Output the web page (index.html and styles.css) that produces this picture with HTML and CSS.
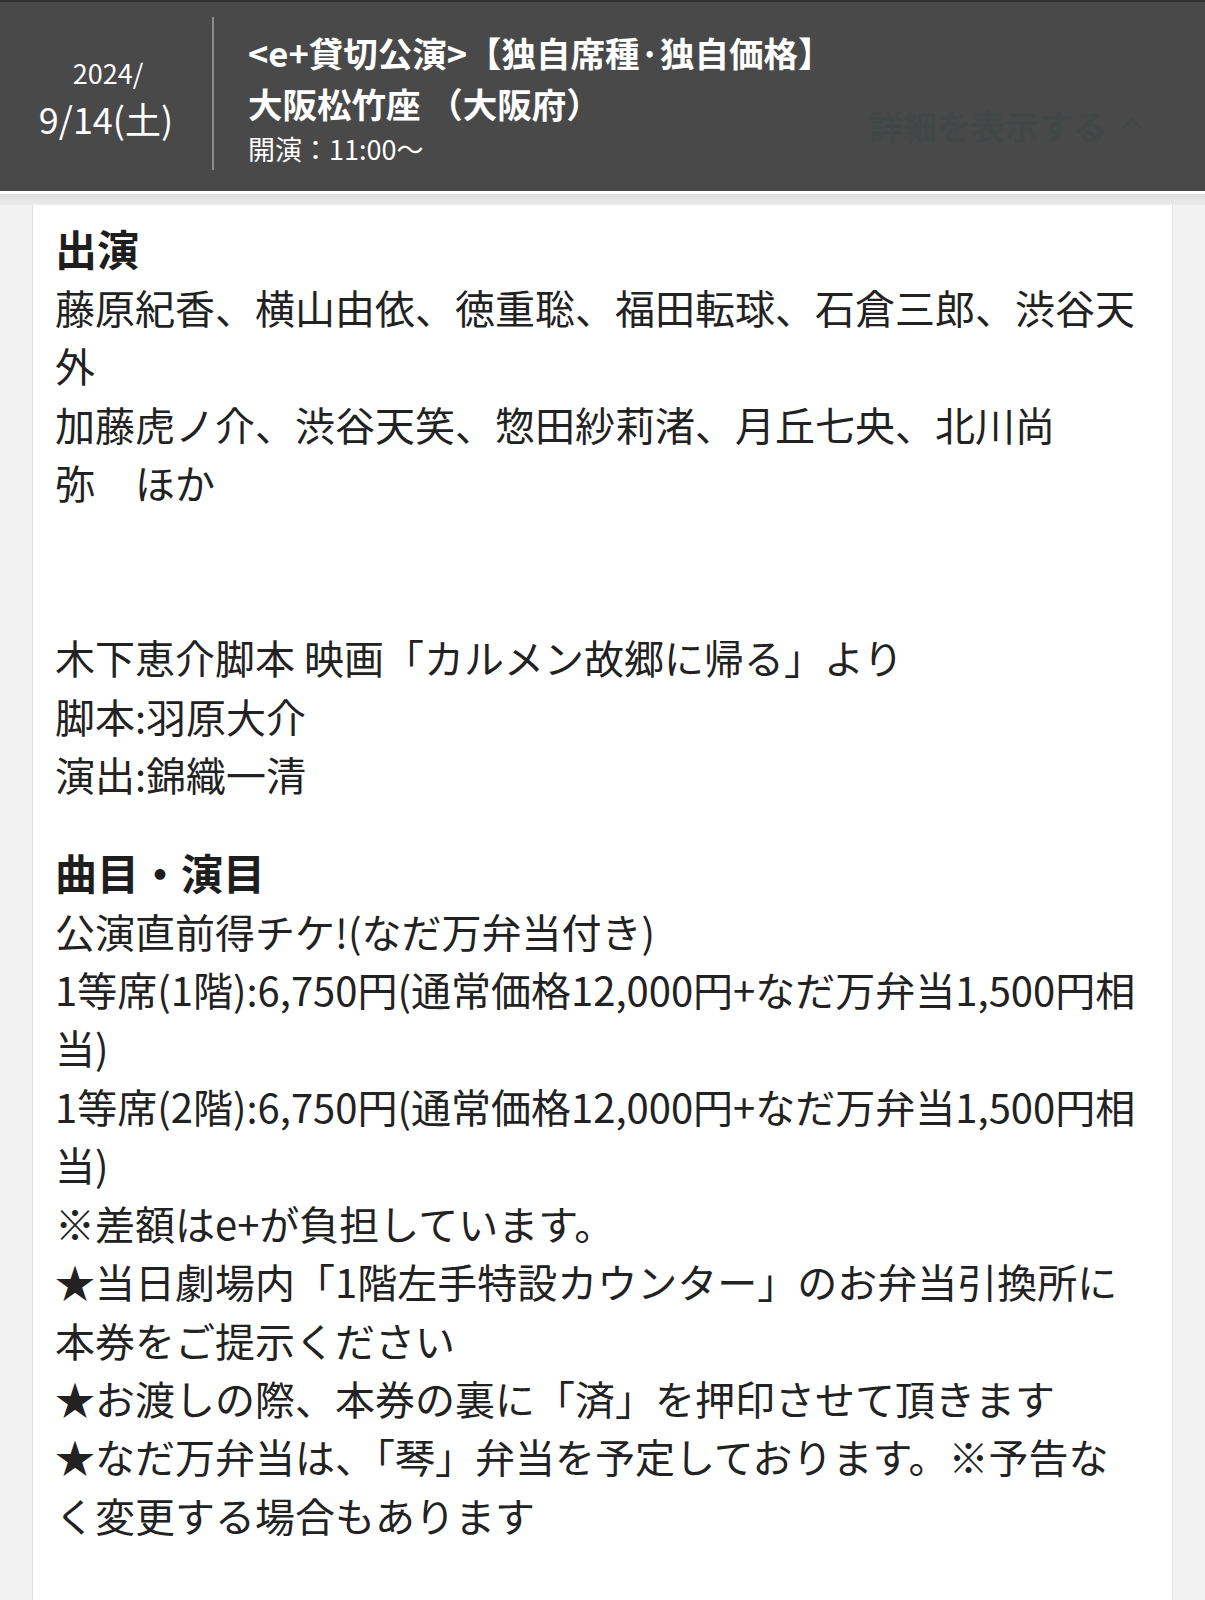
FILE: index.html
```html
<!DOCTYPE html>
<html lang="ja">
<head>
<meta charset="utf-8">
<title>公演詳細</title>
<link rel="stylesheet" href="styles.css">
</head>
<body>
<header class="perf-header">
  <div class="date-col">
    <div class="date-year">2024/</div>
    <div class="date-day">9/14(土)</div>
  </div>
  <div class="divider"></div>
  <div class="info-col">
    <div class="info-title">&lt;e+貸切公演&gt;【独自席種·独自価格】</div>
    <div class="info-venue">大阪松竹座 （大阪府）</div>
    <div class="info-time">開演：11:00〜</div>
  </div>
  <div class="toggle">
    <span class="toggle-text">詳細を表示する</span>
    <svg class="toggle-icon" width="22" height="14" viewBox="0 0 22 14"><polyline points="2,12 11,3 20,12" fill="none" stroke="#434646" stroke-width="2.5"/></svg>
  </div>
</header>
<div class="header-shadow"></div>
<main class="card">
  <h2 class="sec-title">出演</h2>
  <p class="sec-body">藤原紀香、横山由依、徳重聡、福田転球、石倉三郎、渋谷天<br>外<br>加藤虎ノ介、渋谷天笑、惣田紗莉渚、月丘七央、北川尚<br>弥　ほか<br><br><br>木下恵介脚本 映画「カルメン故郷に帰る」より<br>脚本:羽原大介<br>演出:錦織一清</p>
  <h2 class="sec-title sec-title-2">曲目・演目</h2>
  <p class="sec-body">公演直前得チケ!(なだ万弁当付き)<br>1等席(1階):6,750円(通常価格12,000円+なだ万弁当1,500円相<br>当)<br>1等席(2階):6,750円(通常価格12,000円+なだ万弁当1,500円相<br>当)<br>※差額はe+が負担しています。<br>★当日劇場内「1階左手特設カウンター」のお弁当引換所に<br>本券をご提示ください<br>★お渡しの際、本券の裏に「済」を押印させて頂きます<br>★なだ万弁当は、「琴」弁当を予定しております。※予告な<br>く変更する場合もあります</p>
</main>
</body>
</html>
```

FILE: styles.css
```css
html, body {
  margin: 0;
  padding: 0;
}
body {
  background: #f2f2f2;
  font-family: "Noto Sans CJK JP", "Noto Sans", sans-serif;
  color: #222;
  min-height: 1600px;
  display: flex;
  flex-direction: column;
}
.perf-header {
  display: flex;
  align-items: flex-start;
  height: 194px;
  box-sizing: border-box;
  background: #494949;
  border-top: 2px solid #2f2f2f;
  border-bottom: 3px solid #ffffff;
  color: #fff;
  flex: none;
}
.date-col {
  width: 212px;
  flex: none;
  display: flex;
  flex-direction: column;
  align-items: center;
  padding-top: 51px;
}
.date-year {
  font-size: 27px;
  line-height: 40px;
  padding-left: 4px;
}
.date-day {
  font-size: 36px;
  line-height: 50px;
}
.divider {
  width: 2px;
  height: 153px;
  margin-top: 15px;
  background: #8c8c8c;
  flex: none;
}
.info-col {
  padding-left: 34px;
  padding-top: 25px;
}
.info-title,
.info-venue {
  font-size: 34.5px;
  font-weight: bold;
  line-height: 51px;
}
.info-time {
  font-size: 27px;
  line-height: 40px;
}
.toggle {
  margin-left: auto;
  margin-right: 62px;
  margin-top: 101px;
  display: flex;
  align-items: center;
  gap: 14px;
  color: #434646;
}
.toggle-text {
  font-size: 34px;
  font-weight: bold;
  line-height: 46px;
}
.toggle-icon {
  display: block;
  margin-top: -6px;
}
.header-shadow {
  height: 11px;
  flex: none;
  background: linear-gradient(#dedede, #ececec);
}
.card {
  flex: 1;
  margin: 0 32px;
  background: #ffffff;
  border-left: 1px solid #e2e2e2;
  border-right: 1px solid #e2e2e2;
  padding: 13px 8px 40px 22px;
}
.sec-title {
  margin: 0;
  font-size: 42px;
  font-weight: bold;
  line-height: 60px;
  color: #1e1e1e;
}
.sec-title-2 {
  margin-top: 38px;
}
.sec-body {
  margin: 0;
  font-size: 40px;
  line-height: 58.4px;
  white-space: nowrap;
}
```
